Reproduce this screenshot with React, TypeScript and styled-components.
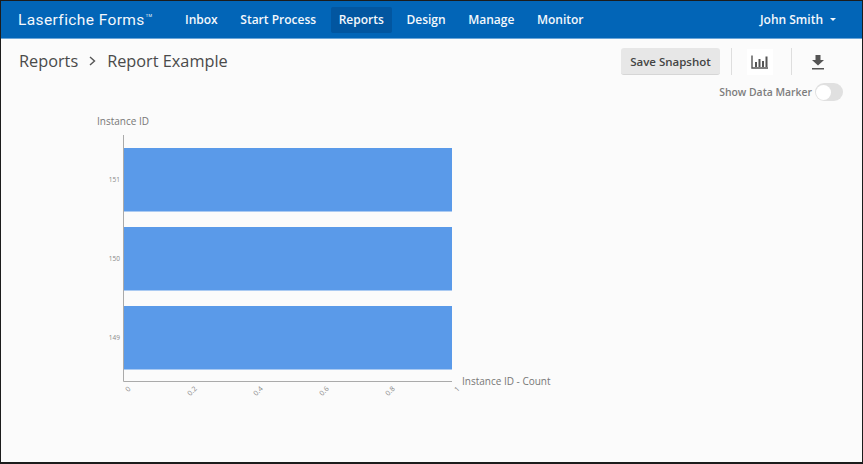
import styled, { createGlobalStyle } from "styled-components"

const GlobalStyle = createGlobalStyle`
  html, body {
    margin: 0;
    padding: 0;
    background: #fbfbfb;
    font-family: "Open Sans", "Liberation Sans", sans-serif;
  }
`

const Page = styled.div`
  width: 863px;
  height: 464px;
  box-sizing: border-box;
  border: 1px solid #1c1c1c;
  border-bottom-width: 2px;
  background: #fbfbfb;
  overflow: hidden;
  display: flex;
  flex-direction: column;
`

const NavBar = styled.header`
  height: 38px;
  flex-shrink: 0;
  box-sizing: border-box;
  display: flex;
  align-items: center;
  background: #0265b7;
  border-bottom: 1px solid #6aa5d8;
  padding: 0 17px 0 17px;
  color: #f4f8fc;
`

const Logo = styled.div`
  width: 159px;
  font-family: Roboto, "Liberation Sans", sans-serif;
  font-size: 15.5px;
  letter-spacing: 0.4px;
  white-space: nowrap;

  sup {
    font-size: 4px;
    vertical-align: 8px;
    line-height: 0;
    margin-left: 1px;
  }
`

const NavList = styled.nav`
  display: flex;
  align-items: center;
  flex: 1;
`

const NavItem = styled.a<{ $active?: boolean }>`
  height: 26px;
  display: flex;
  align-items: center;
  padding: 0 8px;
  margin-right: 6.6px;
  border-radius: 2px;
  font-size: 12px;
  font-weight: 600;
  background: ${(props) => (props.$active ? "#0256a0" : "transparent")};
`

const UserMenu = styled.div`
  display: flex;
  align-items: center;
  gap: 7px;
  font-size: 12px;
  font-weight: 600;
  margin-right: 9px;
`

const Caret = styled.span`
  width: 0;
  height: 0;
  border-left: 3px solid transparent;
  border-right: 3px solid transparent;
  border-top: 3px solid #f4f8fc;
`

const Content = styled.main`
  flex: 1;
  display: flex;
  flex-direction: column;
  min-height: 0;
`

const TitleRow = styled.div`
  display: flex;
  justify-content: space-between;
  align-items: flex-start;
  padding: 9px 18px 0 18px;
`

const Breadcrumb = styled.div`
  display: flex;
  align-items: center;
  height: 26px;
  font-size: 16.3px;
  color: #4a4a4a;
  gap: 11px;
`

const Chevron = styled.svg`
  width: 7px;
  height: 10px;
`

const Toolbar = styled.div`
  display: flex;
  align-items: center;
  height: 27px;
  padding-right: 13px;
`

const SnapshotButton = styled.button`
  width: 99px;
  height: 27px;
  padding: 0;
  border: 0;
  border-bottom: 1px solid #d6d6d6;
  border-radius: 3px;
  background: #e7e7e7;
  color: #444;
  font-family: inherit;
  font-size: 11.5px;
  font-weight: 600;
`

const Divider = styled.span`
  width: 1px;
  height: 27px;
  background: #dedede;
`

const FirstDivider = styled(Divider)`
  margin: 0 15px 0 11px;
`

const SecondDivider = styled(Divider)`
  margin: 0 13px 0 18px;
`

const IconButton = styled.span<{ $white?: boolean }>`
  width: 26px;
  height: 26px;
  display: flex;
  align-items: center;
  justify-content: center;
  background: ${(props) => (props.$white ? "#fff" : "transparent")};
`

const MarkerRow = styled.div`
  display: flex;
  justify-content: flex-end;
  align-items: center;
  gap: 3px;
  padding: 8px 19px 0 0;
  font-size: 10.4px;
  font-weight: 600;
  color: #7d7d7d;
`

const Switch = styled.span`
  width: 28px;
  height: 18px;
  border-radius: 9px;
  background: #e0e0e0;
  display: flex;
  align-items: center;
  padding-left: 1px;
  box-sizing: border-box;

  &::before {
    content: "";
    width: 15px;
    height: 15px;
    border-radius: 50%;
    background: #fff;
  }
`

const Chart = styled.svg`
  width: 600px;
  height: 320px;
  display: block;
  font-family: "Open Sans", "Liberation Sans", sans-serif;
`

const bars = [
  { id: "151", y: 47 },
  { id: "150", y: 126 },
  { id: "149", y: 205 },
]

const ticks = [
  { label: "0", x: 128, y: 288 },
  { label: "0.2", x: 192, y: 290 },
  { label: "0.4", x: 258, y: 290 },
  { label: "0.6", x: 324, y: 290 },
  { label: "0.8", x: 390, y: 290 },
  { label: "1", x: 457, y: 288 },
]

// chart coords: x matches the page, y is page y minus 101
function ReportChart() {
  return (
    <Chart viewBox="1 0 600 320">
      <text x="97" y="24" fontSize="10" fill="#777">Instance ID</text>
      {bars.map((bar) => (
        <g key={bar.id}>
          <rect x="123" y={bar.y} width="329" height="63.5" fill="#5a9ae9" />
          <text x="120" y={bar.y + 34} fontSize="6.5" fill="#888" textAnchor="end">{bar.id}</text>
        </g>
      ))}
      <path d="M123.5 34V280.5H452" fill="none" stroke="#aaa" strokeWidth="1" />
      {ticks.map((tick) => (
        <text
          key={tick.label}
          x={tick.x}
          y={tick.y}
          fontSize="7"
          fill="#888"
          textAnchor="middle"
          dominantBaseline="central"
          transform={`rotate(-45 ${tick.x} ${tick.y})`}
        >
          {tick.label}
        </text>
      ))}
      <text x="462" y="284" fontSize="10" fill="#777">Instance ID - Count</text>
    </Chart>
  )
}

export default function App() {
  return (
    <Page>
      <GlobalStyle />
      <NavBar>
        <Logo>Laserfiche Forms<sup>TM</sup></Logo>
        <NavList>
          <NavItem>Inbox</NavItem>
          <NavItem>Start Process</NavItem>
          <NavItem $active>Reports</NavItem>
          <NavItem>Design</NavItem>
          <NavItem>Manage</NavItem>
          <NavItem>Monitor</NavItem>
        </NavList>
        <UserMenu>John Smith <Caret /></UserMenu>
      </NavBar>
      <Content>
        <TitleRow>
          <Breadcrumb>
            Reports
            <Chevron viewBox="0 0 7 10">
              <path d="M1 1l4.5 4L1 9" fill="none" stroke="#555" strokeWidth="1.4" />
            </Chevron>
            Report Example
          </Breadcrumb>
          <Toolbar>
            <SnapshotButton>Save Snapshot</SnapshotButton>
            <FirstDivider />
            <IconButton $white>
              <svg width="18" height="16" viewBox="0 0 18 16">
                <path d="M1 1.5v12.5h16" fill="none" stroke="#555" strokeWidth="1.4" />
                <path d="M4 8h2v5H4zM7.5 5h2v8h-2zM11 7h2v6h-2zM14.5 2.5h2V13h-2z" fill="#555" />
              </svg>
            </IconButton>
            <SecondDivider />
            <IconButton>
              <svg width="14" height="16" viewBox="0 0 14 16">
                <path d="M4.5 1h5v5H13L7 11.5 1 6h3.5z" fill="#555" />
                <path d="M1 14h12v1.5H1z" fill="#555" />
              </svg>
            </IconButton>
          </Toolbar>
        </TitleRow>
        <MarkerRow>
          Show Data Marker
          <Switch />
        </MarkerRow>
        <ReportChart />
      </Content>
    </Page>
  )
}
